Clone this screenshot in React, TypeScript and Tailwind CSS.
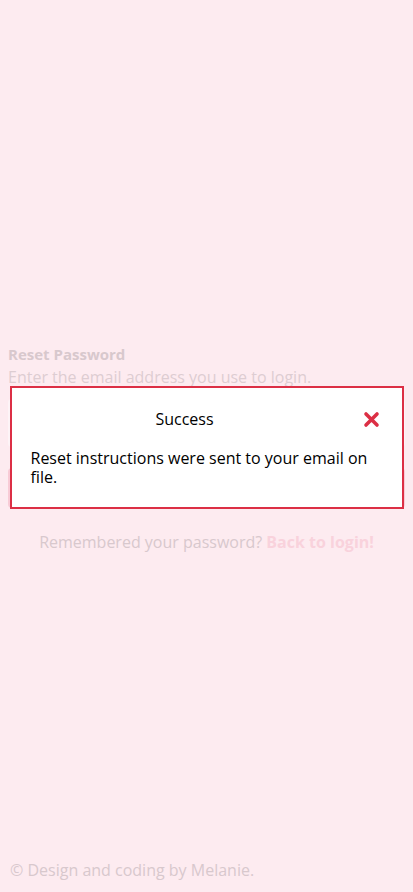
import { useState } from "react";

const font = { fontFamily: '"Open Sans", "Liberation Sans", sans-serif' };

export default function App() {
  const [open, setOpen] = useState(true);

  return (
    <div style={font} className="relative flex min-h-[892px] flex-col bg-[#fdebf0]">
      <main className="flex-1 px-2 pt-[343px]">
        <h1 className="text-[15px] font-bold leading-[22px] text-[#d8c8cd]">Reset Password</h1>
        <p className="mt-[1px] text-[16px] leading-[22px] text-[#ddcdd2]">
          Enter the email address you use to login.
        </p>
        <div className="mt-[11px] h-[48px] w-full rounded-sm bg-[#fdf4f7]" />
        <button className="mt-[21px] h-[40px] w-full rounded-sm bg-[#f8cbd6]" />
        <p className="mt-[17px] text-center text-[16px] leading-[22px] text-[#d8c8cd]">
          Remembered your password?{" "}
          <a href="#" className="font-bold text-[#f9d2dc]">
            Back to login!
          </a>
        </p>
      </main>
      <footer className="px-[10px] pb-[11px] text-[16px] leading-[22px] text-[#d8c8cd]">
        © Design and coding by Melanie.
      </footer>

      {open && (
        <div className="absolute inset-0 flex items-start justify-center pt-[386px]">
          <div className="w-[394px] border-2 border-[#dc2f45] bg-white px-[19px] pb-[20px] text-black">
            <div className="flex items-center pt-[20px]">
              <h2 className="flex-1 text-center text-[16px] leading-[22px]">Success</h2>
              <button
                onClick={() => setOpen(false)}
                className="flex w-[44px] justify-end pr-[3px] text-[#dc2f45]"
                aria-label="Close"
              >
                <svg width="17" height="17" viewBox="0 0 17 17">
                  <path d="M3 3 L14 14 M14 3 L3 14" stroke="currentColor" strokeWidth="3.6" strokeLinecap="round" />
                </svg>
              </button>
            </div>
            <p className="mt-[19px] text-[16px] leading-[19px]">
              Reset instructions were sent to your email on file.
            </p>
          </div>
        </div>
      )}
    </div>
  );
}
